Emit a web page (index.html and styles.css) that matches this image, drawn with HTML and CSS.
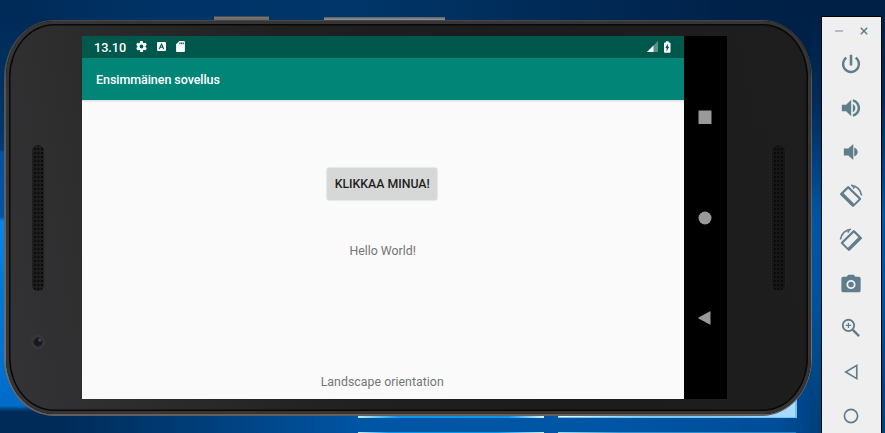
FILE: index.html
```html
<!DOCTYPE html>
<html lang="fi">
<head>
<meta charset="utf-8">
<title>Ensimmäinen sovellus</title>
<link rel="stylesheet" href="styles.css">
</head>
<body>
<main class="desktop">
  <div class="glow glow-left"></div>
  <div class="glow glow-right"></div>
  <div class="pane pane-a"></div>
  <div class="pane pane-b"></div>
  <div class="pane pane-c"></div>
  <div class="pane pane-d"></div>
  <div class="key key-power"></div>
  <div class="key key-volume"></div>

  <section class="phone">
    <div class="phone-body">
      <div class="speaker speaker-left"></div>
      <div class="camera"></div>
      <div class="speaker speaker-right"></div>
      <div class="screen">
        <div class="app">
          <div class="status-bar">
            <span class="clock">13.10</span>
            <svg class="st gear" viewBox="0 0 24 24"><path d="M19.4 13c0-.3.1-.6.1-1s0-.7-.1-1l2.100-1.600c.2-.2.3-.4.1-.7l-2-3.400c-.1-.2-.4-.3-.6-.2l-2.500 1c-.5-.4-1.100-.7-1.700-1l-.4-2.600c0-.3-.2-.5-.5-.5h-4c-.2 0-.4.2-.5.4l-.4 2.700c-.6.2-1.100.6-1.700 1L4.900 5c-.2 0-.5 0-.6.200l-2 3.500c-.1.2-.1.5.1.6L4.600 11c0 .3-.1.6-.1 1s0 .7.1 1l-2.100 1.600c-.2.2-.2.4-.1.7l2 3.400c.1.2.4.3.6.2l2.500-1c.5.4 1.100.7 1.700 1l.4 2.600c0 .3.2.5.500.5h4c.2 0 .4-.2.5-.4l.4-2.700c.6-.2 1.100-.6 1.700-1l2.400 1c.2.1.5 0 .6-.2l2-3.500c.1-.2.1-.5-.1-.6zM12 15.500a3.500 3.500 0 1 1 0-7 3.500 3.500 0 0 1 0 7z" fill-rule="evenodd"/></svg>
            <svg class="st keyb" viewBox="0 0 9 9"><rect width="9" height="9" rx="1"/><path d="M2.300 7l2.200-5 2.200 5M3.200 5.200h2.600" fill="none" stroke="#00574b" stroke-width="1.100"/></svg>
            <svg class="st sd" viewBox="0 0 16 20"><path d="M14 0H6L0 6v12c0 1.100.9 2 2 2h12c1.100 0 2-.9 2-2V2c0-1.100-.9-2-2-2zM8 6H6V2.500h2zm3 0H9V2.500h2zm3 0h-2V2.500h2z"/></svg>
            <svg class="st signal" viewBox="0 0 11 11"><path d="M11 0v11H0z" opacity=".35"/><path d="M6.500 4.500V11H0z"/></svg>
            <svg class="st battery" viewBox="0 0 10 18"><path d="M8.700 2H7V0H3v2H1.300C.6 2 0 2.600 0 3.300v13.400C0 17.400.6 18 1.300 18h7.400c.7 0 1.300-.6 1.300-1.300V3.300C10 2.600 9.400 2 8.700 2zM4 16v-5.500H2L6 4v4.500h2z"/></svg>
          </div>
          <header class="app-bar"><h1>Ensimmäinen sovellus</h1></header>
          <div class="content">
            <button class="btn">KLIKKAA MINUA!</button>
            <p class="hello">Hello World!</p>
            <p class="orientation">Landscape orientation</p>
          </div>
        </div>
        <nav class="nav-bar">
          <svg viewBox="0 0 14 14"><rect x=".5" y=".5" width="13" height="13.500" rx=".6"/></svg>
          <svg viewBox="0 0 14 14"><circle cx="7" cy="7" r="6.500"/></svg>
          <svg viewBox="0 0 14 14"><path d="M12.500 .2v13.600Q13 14 12.200 13.800L.6 7.600Q0 7 .6 6.500L12 .2z"/></svg>
        </nav>
      </div>
    </div>
  </section>

  <aside class="toolbar">
    <div class="window-controls">
      <svg viewBox="0 0 10 10"><path d="M1 5h8" stroke="#9fb1ba" stroke-width="1.600"/></svg>
      <svg viewBox="0 0 10 10"><path d="M1.800 1.800l6.400 6.400M8.200 1.800L1.800 8.200" stroke="#607d8b" stroke-width="1.500"/></svg>
    </div>
    <svg class="tool" viewBox="0 0 24 24"><path d="M13.400 1.800h-2.800v11.700h2.800zM18 4.200l-1.700 1.900A7.300 7.300 0 0 1 19.300 12a7.300 7.300 0 1 1-11.600-5.900L6 4.200A9.900 9.900 0 1 0 21.900 12 9.800 9.800 0 0 0 18 4.200z"/></svg>
    <svg class="tool" viewBox="0 0 24 24"><path d="M2 8.500v7h4.700L12.200 21V3L6.700 8.500zM14 7.500v9c1.700-.8 2.800-2.500 2.800-4.500S15.700 8.300 14 7.500zM14 2.500v2.700c3 .8 5.200 3.600 5.200 6.800s-2.200 6-5.200 6.800v2.700c4.600-.8 7.900-4.800 7.900-9.500S18.600 3.300 14 2.500z"/></svg>
    <svg class="tool" viewBox="0 0 24 24"><path d="M4.200 8.200v7.600h4.800l5.500 4.900V3.300L9 8.200zM15.500 7v10c2.200-.8 3.800-2.700 3.800-5s-1.600-4.200-3.800-5z"/></svg>
    <svg class="tool turn" viewBox="0 0 24 24"><path d="M8.300 2.400L1.400 9.300q-.9.900 0 1.800l11.700 11.500q.9.900 1.800 0l6.900-6.900q.9-.9 0-1.800L10.100 2.400q-.9-.9-1.800 0zM9.200 4.800L19.700 15.100l-4.600 4.600L4.600 9.300z" fill-rule="evenodd"/><path d="M12 1.300c5.400.2 9.800 4.500 10.600 10.200" fill="none" stroke="#607d8b" stroke-width="1.600"/><path d="M12 .5l4.300 3.300-1.700 1.100z"/></svg>
    <svg class="tool turn flip" viewBox="0 0 24 24"><path d="M8.300 2.400L1.400 9.300q-.9.900 0 1.800l11.700 11.500q.9.900 1.800 0l6.900-6.900q.9-.9 0-1.800L10.100 2.400q-.9-.9-1.800 0zM9.200 4.800L19.700 15.100l-4.600 4.600L4.600 9.300z" fill-rule="evenodd"/><path d="M12 1.300c5.400.2 9.800 4.500 10.600 10.200" fill="none" stroke="#607d8b" stroke-width="1.600"/><path d="M12 .5l4.300 3.300-1.700 1.100z"/></svg>
    <svg class="tool" viewBox="0 0 24 24"><path d="M9 2L7.200 4H3.500a2 2 0 0 0-2 2v13a2 2 0 0 0 2 2h17a2 2 0 0 0 2-2V6a2 2 0 0 0-2-2h-3.700L15 2zM12 17.500a5 5 0 1 1 0-10 5 5 0 0 1 0 10z" fill-rule="evenodd"/><circle cx="12" cy="12.500" r="3"/></svg>
    <svg class="tool" viewBox="0 0 24 24"><g fill="none" stroke="#607d8b"><circle cx="9.200" cy="9.200" r="6.200" stroke-width="2"/><path d="M14 14l6.800 6.800" stroke-width="2.600"/><path d="M9.200 6.300v5.800M6.300 9.200h5.800" stroke-width="1.300"/></g></svg>
    <svg class="tool" viewBox="0 0 24 24"><path d="M18.300 4.800v14.400L6.200 12z" fill="none" stroke="#607d8b" stroke-width="1.800"/></svg>
    <svg class="tool" viewBox="0 0 24 24"><circle cx="12" cy="12" r="7.200" fill="none" stroke="#607d8b" stroke-width="1.800"/></svg>
  </aside>
</main>
</body>
</html>
```
FILE: styles.css
```css
* { box-sizing: border-box; }
body { margin: 0; font-family: Roboto, "Liberation Sans", sans-serif; }
h1, p { margin: 0; font-weight: 400; }
svg { display: block; flex: none; }

.desktop {
  position: relative;
  width: 885px;
  height: 433px;
  overflow: hidden;
  background: linear-gradient(90deg, #002a57 0, #003468 180px, #003669 360px, #002b58 540px, #002148 750px, #001f44 885px);
}
.glow { position: absolute; }
.glow-left {
  left: 0; top: 18px; width: 60px; height: 415px;
  background: linear-gradient(#002b59, #003568 110px, #003b75 132px, #00519f 134px, #0054a4 199px, #0a85e6 203px, #0078d7 270px, #006cc9 388px, #00417f 391px, #002b58 394px, #002b58);
}
.glow-right {
  left: 60px; top: 150px; width: 825px; height: 283px;
  background: linear-gradient(90deg, #002b58, #003f7c 150px, #0055a4 300px, #0055a4 560px, #004d98 720px, #00407f 762px, #00407f);
}
.glow-right::after {
  content: "";
  position: absolute;
  right: 0; top: -150px; width: 74px; height: 433px;
  background: linear-gradient(#001f44, #002b58 100px, #003f7d 160px, #0055a2 215px, #0053a0 290px, #00437f 400px, #00407c);
}
.pane { position: absolute; }
.pane-a { left: 358px; top: 412px; width: 186px; height: 6px; background: linear-gradient(90deg, #baf2ff, #079be9 40px, #0797ee 150px, #d5f7ff); }
.pane-b { left: 558px; top: 398px; width: 239px; height: 20px; background: linear-gradient(90deg, #e8fbff, #79ccfa 90px, #80cafa 150px, #acdcff); border-right: 2px solid #70c3f2; border-bottom: 1px solid #73c5f5; }
.pane-c { left: 358px; top: 432px; width: 186px; height: 1px; background: linear-gradient(90deg, #bff3ff, #0797ee 30px, #0797ee 140px, #bff3ff); }
.pane-d { left: 558px; top: 432px; width: 238px; height: 1px; background: linear-gradient(90deg, #9adfff, #3492d2 60px, #2281c4); }

.key { position: absolute; background: linear-gradient(#494949 1px, #777 1px, #666); }
.key-power { left: 214px; top: 16px; width: 55px; height: 5px; }
.key-volume { left: 324px; top: 17px; width: 121px; height: 4px; background: linear-gradient(#626870 1px, #929292 2px, #777); }

.phone {
  position: absolute;
  left: 4px; top: 20px; width: 808px; height: 396px;
  padding: 1px 1px 2px 2px;
  border-radius: 50px / 58px;
  background: linear-gradient(#484848, #5c5c5c 30%, #707070 85%, #625e5b);
}
.phone-body {
  position: relative;
  width: 100%; height: 100%;
  padding: 15px 0 0 76px;
  border-radius: 48px / 56px;
  background: linear-gradient(78deg, #343436 0, #2b2b2c 18%, #202020 40%, #1c1c1c 62%, #1e1e1f);
  box-shadow: inset 0 0 0 3px #353535, inset 0 0 0 4.500px #080808;
}
.screen { display: flex; width: 645px; height: 363px; background: #000; }
.app { display: flex; flex-direction: column; width: 602.400px; background: #fafafa; }
.status-bar { display: flex; align-items: center; height: 21.500px; padding-left: 12px; background: #00574b; color: #fff; }
.clock { width: 41px; padding-top: 1px; font-size: 12.700px; font-weight: 500; line-height: 21px; letter-spacing: -.05px; }
.st { fill: #fff; }
.gear { width: 13px; height: 13px; }
.keyb { width: 9px; height: 9px; margin-left: 8.500px; }
.sd { width: 9px; height: 11px; margin-left: 10px; }
.signal { width: 11px; height: 11px; margin-left: auto; }
.battery { width: 6.500px; height: 12px; margin: 0 13.500px 0 6px; }
.app-bar { display: flex; align-items: center; height: 42.500px; padding-left: 14px; background: #008577; box-shadow: 0 1px 2px rgba(0, 0, 0, .15); }
.app-bar h1 { padding-top: 2px; color: #fff; font-size: 12.500px; font-weight: 500; line-height: 18px; letter-spacing: -.06px; white-space: nowrap; }
.content { display: flex; flex: 1; flex-direction: column; align-items: center; padding-top: 67.500px; padding-right: 2px; color: #757575; font-size: 12.300px; line-height: 16px; }
.btn { width: 110.500px; height: 32.500px; padding: 0; border: 0; border-radius: 2px; background: #d6d7d7; box-shadow: 0 0 2px rgba(0, 0, 0, .25); color: #1f1f1f; font: 500 12.300px/32.500px Roboto, sans-serif; white-space: nowrap; }
.hello { margin-top: 42.500px; margin-left: 1px; }
.orientation { margin-top: 115px; letter-spacing: .05px; }

.nav-bar { display: flex; flex: 1; flex-direction: column; align-items: center; gap: 86.500px; padding-top: 74px; padding-right: 1.500px; }
.nav-bar svg { width: 14px; height: 14px; fill: #999; }

.speaker {
  position: absolute;
  top: 124px; width: 12px; height: 146px;
  border-radius: 6px;
  background: radial-gradient(circle, #080808 .6px, transparent 1.200px) 1px 2px / 3.600px 4px, #1e1e1e;
  box-shadow: 0 0 0 .5px #303030;
}
.speaker-left { left: 26px; }
.speaker-right { left: 766px; width: 13px; background-color: #161616; box-shadow: 0 0 0 .5px #262626; }
.camera {
  position: absolute;
  left: 25px; top: 314px; width: 14px; height: 14px;
  border-radius: 50%;
  background: radial-gradient(circle at 63% 36%, #755d68 0, #302c38 1.600px, transparent 2px), radial-gradient(circle, #17191f 3px, #25262a 4.500px, #38383a 5px);
}

.toolbar {
  position: absolute;
  left: 821px; top: 16px; width: 61px; height: 440px;
  display: flex; flex-direction: column; align-items: center; gap: 22px;
  padding-right: 2px;
  border: 1px solid #000;
  background: #efefef;
}
.window-controls { display: flex; gap: 15px; height: 14px; margin-bottom: -16px; padding: 9px 0 0 1px; }
.window-controls svg { width: 10px; height: 10px; }
.tool { width: 22px; height: 22px; fill: #607d8b; }
.window-controls + .tool { margin-top: 16px; }
.turn { width: 24px; height: 24px; margin: -1px 0; }
.flip { transform: scaleX(-1); }
```
